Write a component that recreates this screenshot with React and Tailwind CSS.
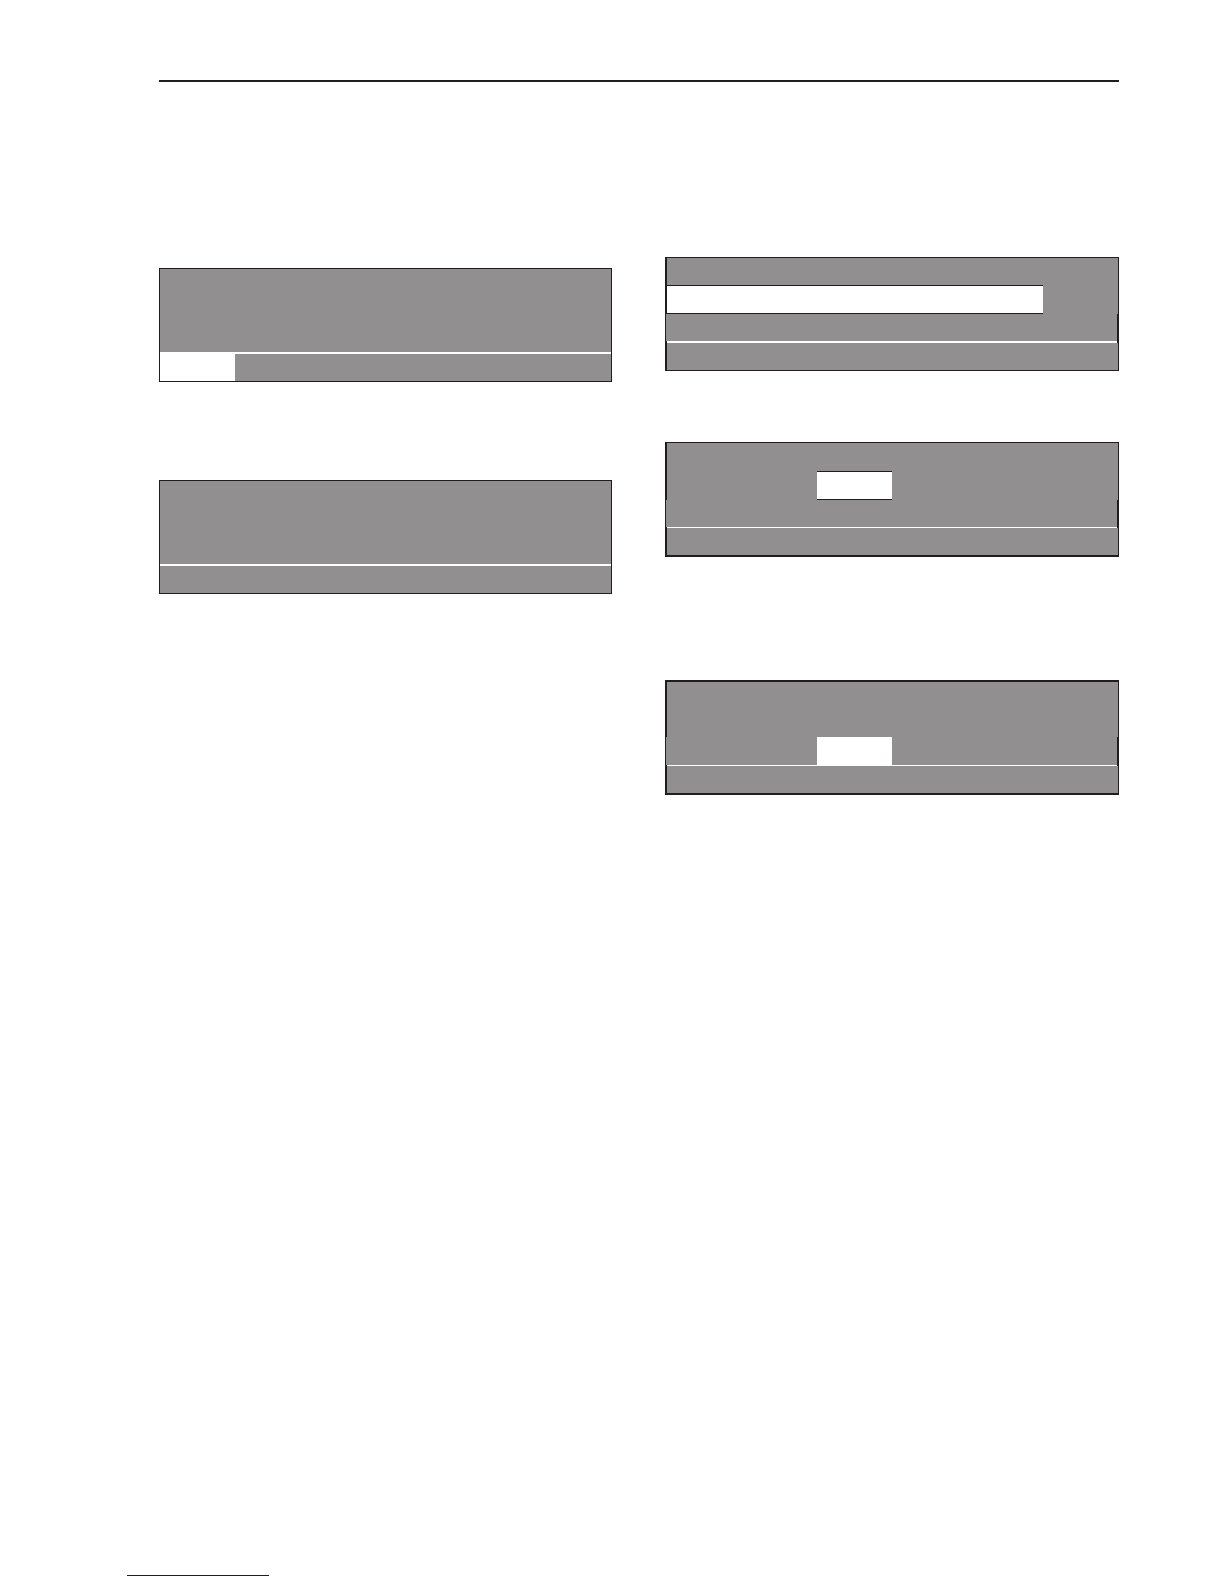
import React from 'react'
import clsx from 'clsx'

const Panel = ({ className, children }) => (
  <div className={clsx('flex w-full flex-col border-[#1f1d1e] bg-[#918f90]', className)}>{children}</div>
)

const Row = ({ className, children }) => (
  <div className={clsx('flex border-[#1f1d1e]', className)}>{children}</div>
)

const Divider = ({ className }) => <div className={clsx('border-[#1f1d1e] bg-white', className)} />

const App = () => {
  return (
    <div className="flex min-h-screen flex-col bg-white">
      <main className="flex-1 pt-20 pr-[105px] pl-[159px]">
        <hr className="h-0.5 border-0 bg-[#1f1d1e]" />

        <div className="grid grid-cols-2 gap-[52px] pt-[175px]">
          {/* Left column */}
          <section className="flex flex-col gap-[98px] pt-[11px] pr-px">
            <Panel className="border">
              <Row className="h-[83px]" />
              <Divider className="h-0.5" />
              <Row className="h-[27px]">
                <div className="w-[75px] bg-white" />
              </Row>
            </Panel>

            <Panel className="border">
              <Row className="h-[83px]" />
              <Divider className="h-0.5" />
              <Row className="h-[27px]" />
            </Panel>
          </section>

          {/* Right column */}
          <section className="flex flex-col">
            <Panel className="border-y">
              <Row className="h-[27px] border-r border-l-2" />
              <Row className="h-[29px] border-r border-l-2">
                <div className="w-5/6 border-y border-[#1f1d1e] bg-white" />
              </Row>
              <Row className="h-[27px] border-r-2 border-l" />
              <Divider className="h-0.5 border-x-2" />
              <Row className="h-[27px] border-r border-l-2" />
            </Panel>

            <Panel className="mt-[71px] border-t border-b-2">
              <Row className="h-[28px] border-r border-l-2" />
              <Row className="h-[29px] border-r border-l-2">
                <div className="ml-[150px] w-[75px] border-y border-[#1f1d1e] bg-white" />
              </Row>
              <Row className="h-[27px] border-r-2 border-l" />
              <Divider className="h-px border-x-2" />
              <Row className="h-[27px] border-r border-l-2" />
            </Panel>

            <Panel className="mt-[123px] border-y-2">
              <Row className="h-[55px] border-r border-l-2" />
              <Row className="h-[28px] border-r-2 border-l">
                <div className="ml-[151px] w-[75px] bg-white" />
              </Row>
              <Divider className="h-px border-x-2" />
              <Row className="h-[27px] border-r border-l-2" />
            </Panel>
          </section>
        </div>
      </main>

      <footer className="pb-2 pl-[127px]">
        <div className="h-px w-[142px] bg-[#120e96]" />
      </footer>
    </div>
  )
}

export default App
